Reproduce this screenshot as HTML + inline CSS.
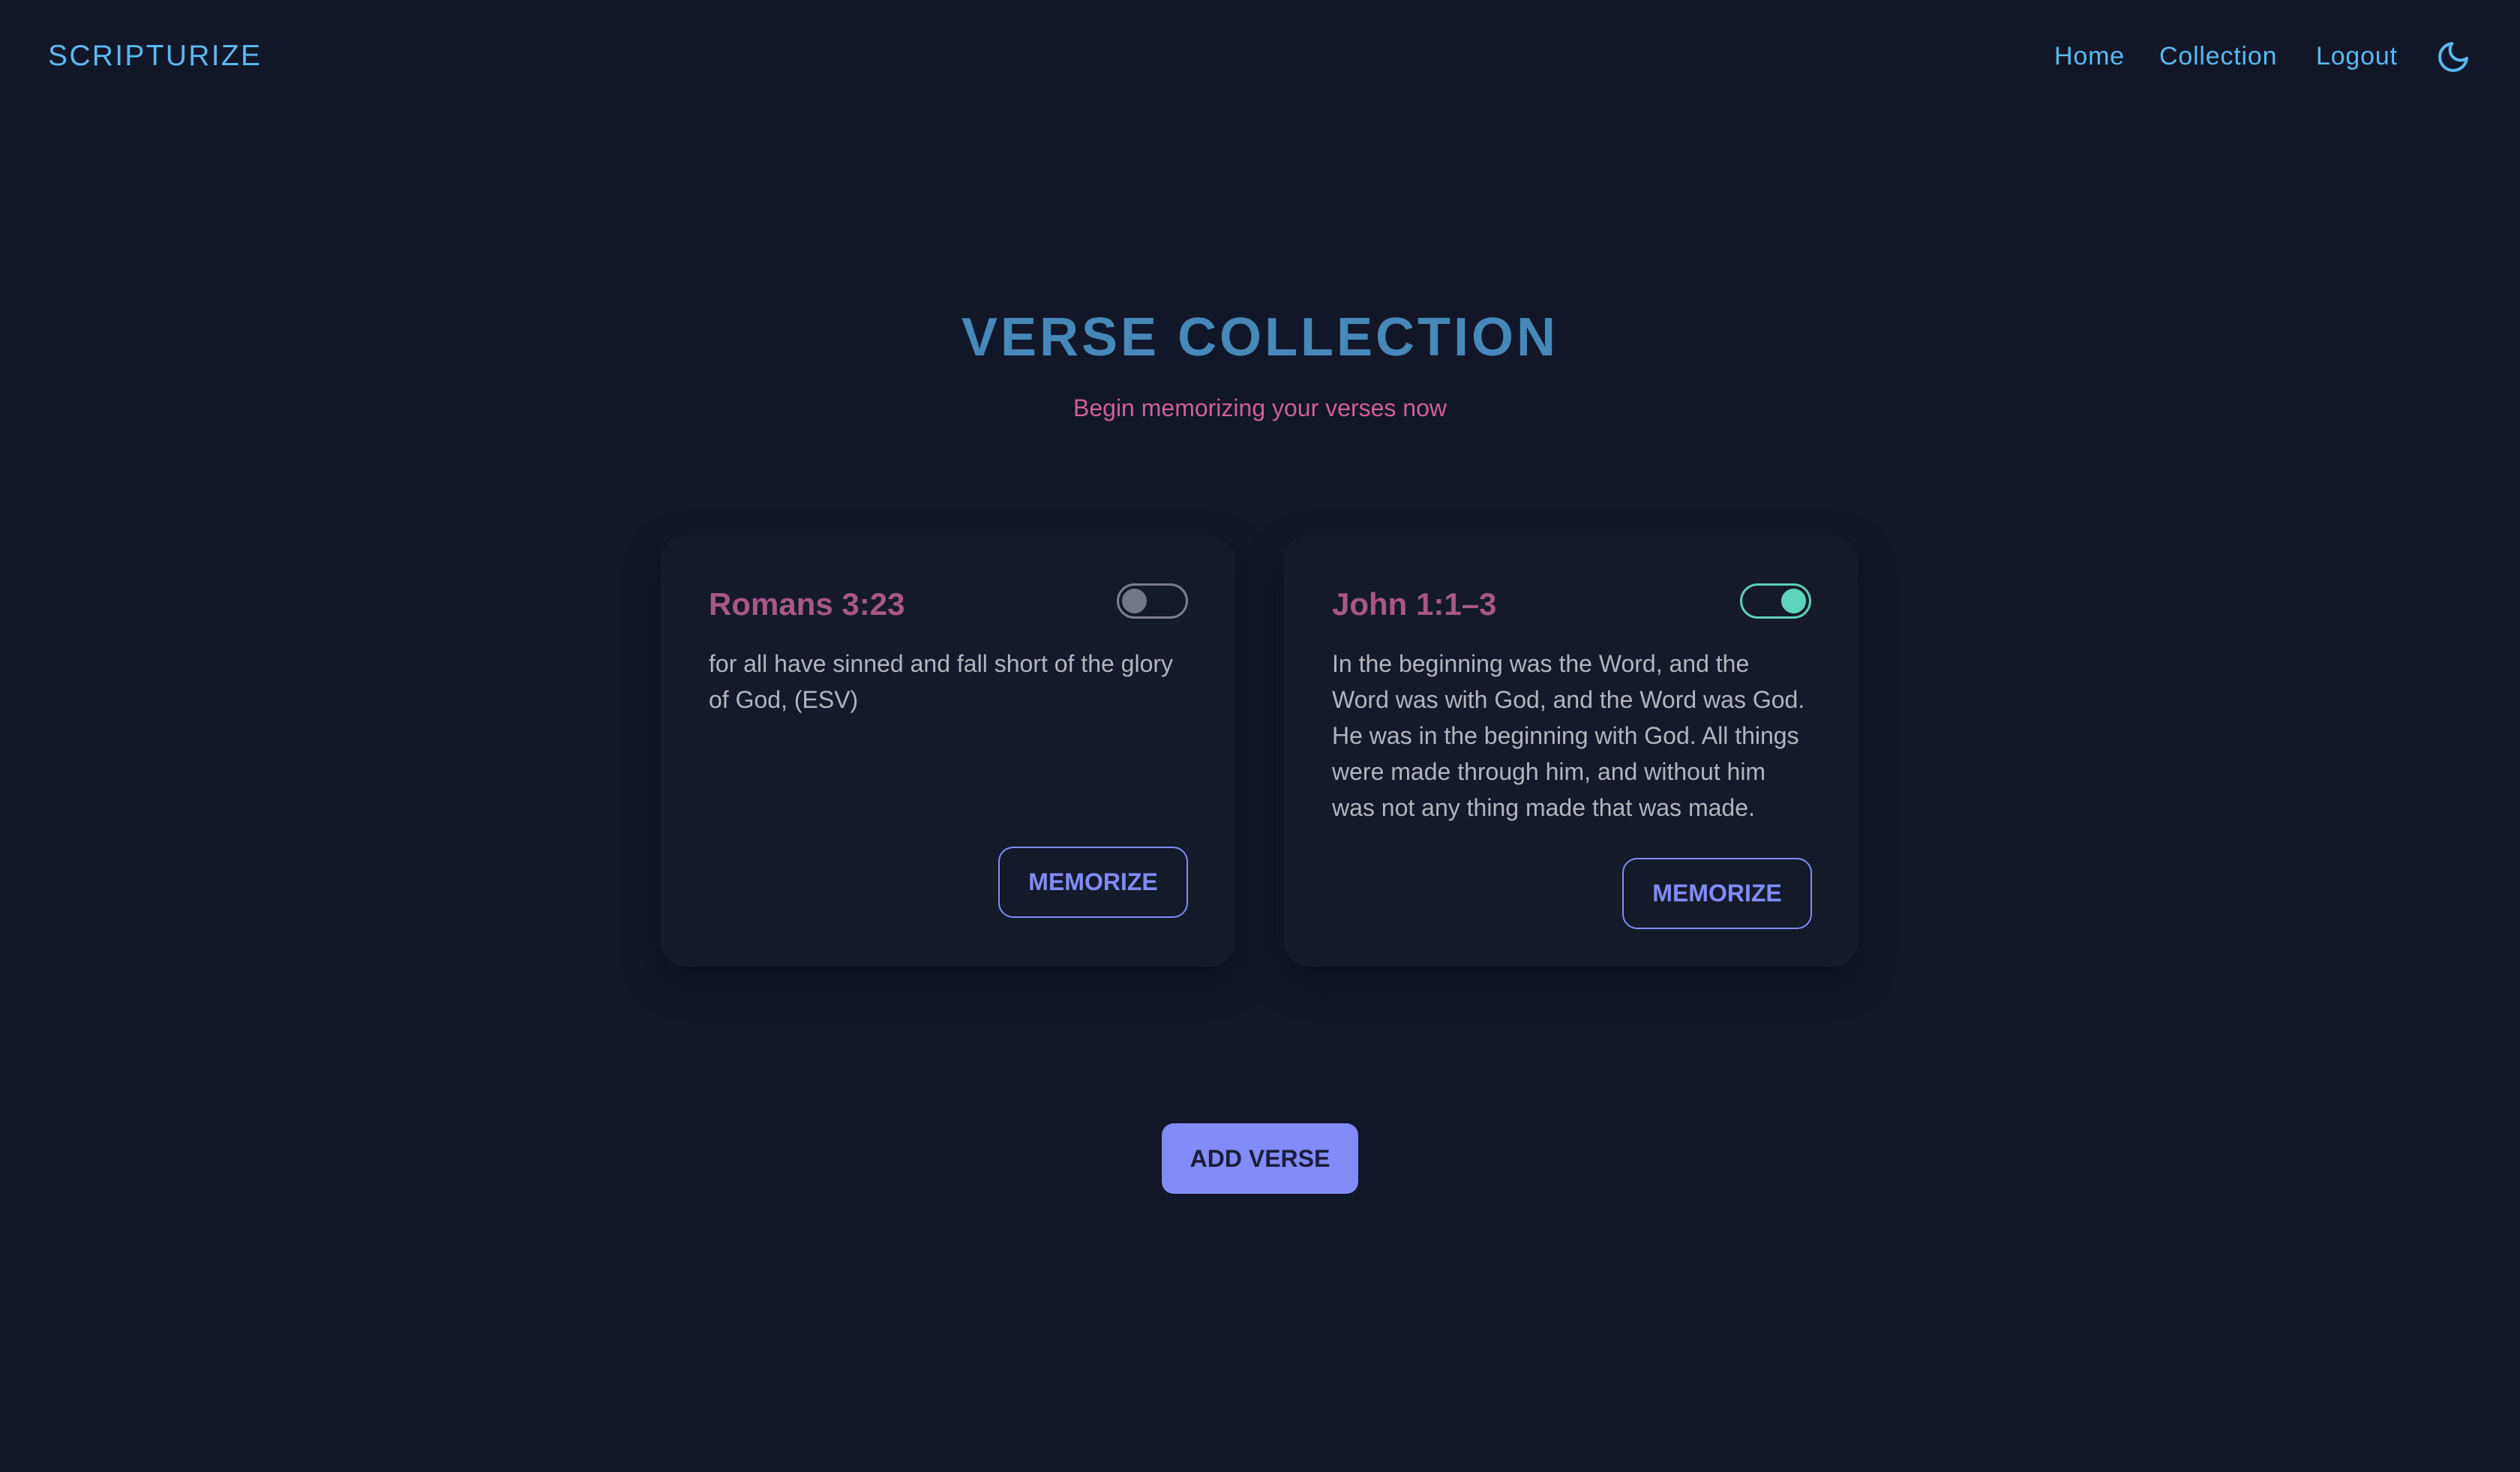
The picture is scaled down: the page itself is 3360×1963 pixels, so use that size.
<!DOCTYPE html>
<html><head><meta charset="utf-8"><style>
*{margin:0;padding:0;box-sizing:border-box}
body{width:3360px;height:1963px;background:#111729;font-family:"Liberation Sans",sans-serif;position:relative;overflow:hidden}
.abs{position:absolute}
.logo{left:64px;top:52px;font-size:39px;letter-spacing:2.3px;color:#5cb8ee;line-height:46px}
.nav{top:54px;font-size:34px;color:#5cb8ee;line-height:42px;letter-spacing:0.8px}
.title{left:0;width:3360px;top:405px;text-align:center;font-size:72px;font-weight:bold;letter-spacing:4px;color:#4688b8;line-height:90px}
.sub{left:0;width:3360px;top:524px;text-align:center;font-size:32px;color:#cf5f9b;line-height:40px}
.card{top:714px;width:765px;height:575px;background:#141a2a;border-radius:32px;box-shadow:0 20px 50px rgba(0,0,0,0.35)}
.ct{position:absolute;left:64px;top:781px;font-size:42px;font-weight:bold;color:#a8578a;line-height:50px}
.ctext{position:absolute;left:64px;top:861px;white-space:nowrap;font-size:32px;color:#b3b5bc;line-height:48px}
.tog{position:absolute;width:95px;height:47px;border-radius:24px;border:3px solid}
.knob{position:absolute;top:4px;width:33px;height:33px;border-radius:50%}
.mem{position:absolute;width:253px;height:95px;border:2.5px solid #818cf8;border-radius:20px;color:#818cf8;font-weight:bold;font-size:32px;display:flex;align-items:center;justify-content:center}
.add{left:1549px;top:1498px;width:262px;height:94px;background:#818cf8;border-radius:16px;color:#1b1d3a;font-weight:bold;font-size:32px;display:flex;align-items:center;justify-content:center}
</style></head><body>
<div class="abs logo">SCRIPTURIZE</div>
<div class="abs nav" style="left:2739px">Home</div>
<div class="abs nav" style="left:2879px">Collection</div>
<div class="abs nav" style="left:3088px">Logout</div>
<svg class="abs" style="left:3247px;top:52px" width="48" height="48" viewBox="0 0 24 24" fill="none" stroke="#5cb8ee" stroke-width="2" stroke-linecap="round" stroke-linejoin="round"><path d="M21 12.79A9 9 0 1 1 11.21 3 7 7 0 0 0 21 12.79z"/></svg>
<div class="abs title">VERSE COLLECTION</div>
<div class="abs sub">Begin memorizing your verses now</div>

<div class="abs card" style="left:881px"></div>
<div class="abs card" style="left:1712px"></div>

<div class="abs ct" style="left:945px">Romans 3:23</div>
<div class="abs ctext" style="left:945px">for all have sinned and fall short of the glory<br>of God, (ESV)</div>
<div class="tog" style="left:1489px;top:778px;border-color:#7b7f88"><div class="knob" style="left:4px;background:#737783"></div></div>
<div class="mem" style="left:1331px;top:1129px">MEMORIZE</div>

<div class="abs ct" style="left:1776px">John 1:1–3</div>
<div class="abs ctext" style="left:1776px">In the beginning was the Word, and the<br>Word was with God, and the Word was God.<br>He was in the beginning with God. All things<br>were made through him, and without him<br>was not any thing made that was made.</div>
<div class="tog" style="left:2320px;top:778px;border-color:#5fcfb8"><div class="knob" style="left:52px;background:#5fd4bc"></div></div>
<div class="mem" style="left:2163px;top:1144px">MEMORIZE</div>

<div class="abs add">ADD VERSE</div>
</body></html>
